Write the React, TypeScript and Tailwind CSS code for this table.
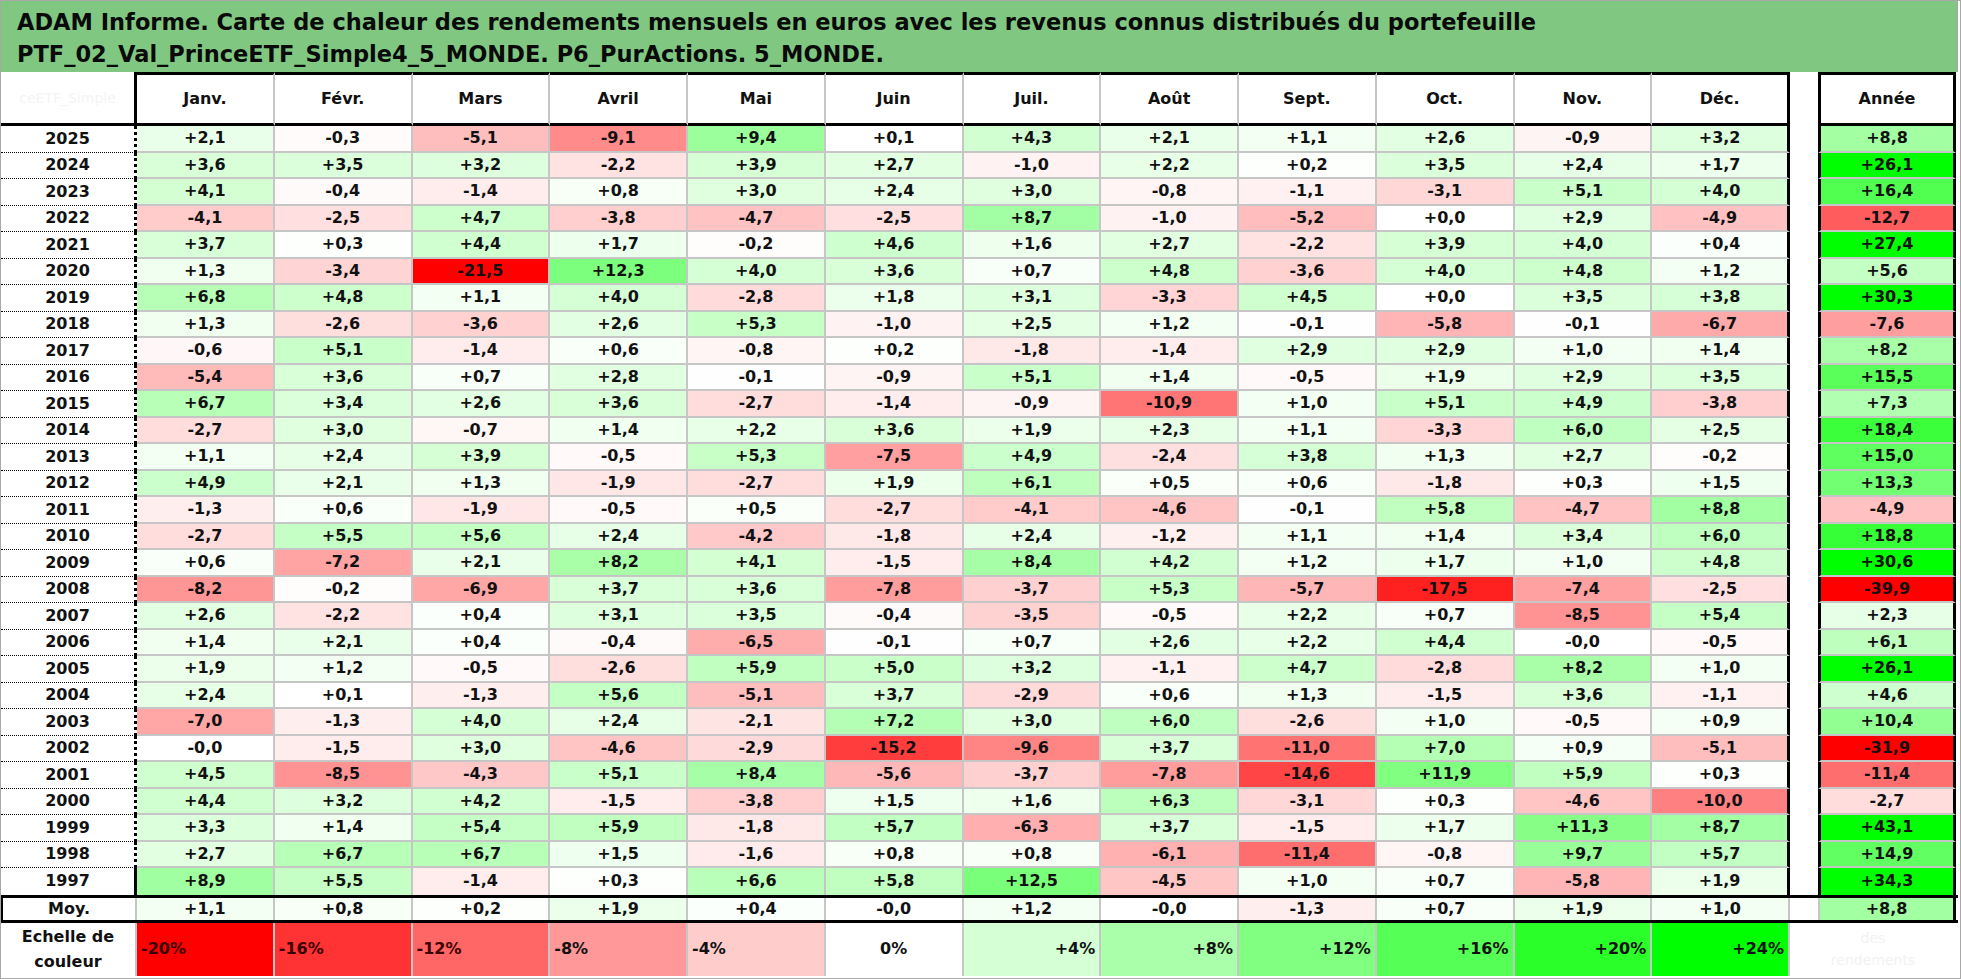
import React from "react";

const MONTHS = ["Janv.", "Févr.", "Mars", "Avril", "Mai", "Juin", "Juil.", "Août", "Sept.", "Oct.", "Nov.", "Déc."];

// year, 12 monthly returns, annual return
const DATA: [string, string, string][] = [
  ["2025", "+2,1 -0,3 -5,1 -9,1 +9,4 +0,1 +4,3 +2,1 +1,1 +2,6 -0,9 +3,2", "+8,8"],
  ["2024", "+3,6 +3,5 +3,2 -2,2 +3,9 +2,7 -1,0 +2,2 +0,2 +3,5 +2,4 +1,7", "+26,1"],
  ["2023", "+4,1 -0,4 -1,4 +0,8 +3,0 +2,4 +3,0 -0,8 -1,1 -3,1 +5,1 +4,0", "+16,4"],
  ["2022", "-4,1 -2,5 +4,7 -3,8 -4,7 -2,5 +8,7 -1,0 -5,2 +0,0 +2,9 -4,9", "-12,7"],
  ["2021", "+3,7 +0,3 +4,4 +1,7 -0,2 +4,6 +1,6 +2,7 -2,2 +3,9 +4,0 +0,4", "+27,4"],
  ["2020", "+1,3 -3,4 -21,5 +12,3 +4,0 +3,6 +0,7 +4,8 -3,6 +4,0 +4,8 +1,2", "+5,6"],
  ["2019", "+6,8 +4,8 +1,1 +4,0 -2,8 +1,8 +3,1 -3,3 +4,5 +0,0 +3,5 +3,8", "+30,3"],
  ["2018", "+1,3 -2,6 -3,6 +2,6 +5,3 -1,0 +2,5 +1,2 -0,1 -5,8 -0,1 -6,7", "-7,6"],
  ["2017", "-0,6 +5,1 -1,4 +0,6 -0,8 +0,2 -1,8 -1,4 +2,9 +2,9 +1,0 +1,4", "+8,2"],
  ["2016", "-5,4 +3,6 +0,7 +2,8 -0,1 -0,9 +5,1 +1,4 -0,5 +1,9 +2,9 +3,5", "+15,5"],
  ["2015", "+6,7 +3,4 +2,6 +3,6 -2,7 -1,4 -0,9 -10,9 +1,0 +5,1 +4,9 -3,8", "+7,3"],
  ["2014", "-2,7 +3,0 -0,7 +1,4 +2,2 +3,6 +1,9 +2,3 +1,1 -3,3 +6,0 +2,5", "+18,4"],
  ["2013", "+1,1 +2,4 +3,9 -0,5 +5,3 -7,5 +4,9 -2,4 +3,8 +1,3 +2,7 -0,2", "+15,0"],
  ["2012", "+4,9 +2,1 +1,3 -1,9 -2,7 +1,9 +6,1 +0,5 +0,6 -1,8 +0,3 +1,5", "+13,3"],
  ["2011", "-1,3 +0,6 -1,9 -0,5 +0,5 -2,7 -4,1 -4,6 -0,1 +5,8 -4,7 +8,8", "-4,9"],
  ["2010", "-2,7 +5,5 +5,6 +2,4 -4,2 -1,8 +2,4 -1,2 +1,1 +1,4 +3,4 +6,0", "+18,8"],
  ["2009", "+0,6 -7,2 +2,1 +8,2 +4,1 -1,5 +8,4 +4,2 +1,2 +1,7 +1,0 +4,8", "+30,6"],
  ["2008", "-8,2 -0,2 -6,9 +3,7 +3,6 -7,8 -3,7 +5,3 -5,7 -17,5 -7,4 -2,5", "-39,9"],
  ["2007", "+2,6 -2,2 +0,4 +3,1 +3,5 -0,4 -3,5 -0,5 +2,2 +0,7 -8,5 +5,4", "+2,3"],
  ["2006", "+1,4 +2,1 +0,4 -0,4 -6,5 -0,1 +0,7 +2,6 +2,2 +4,4 -0,0 -0,5", "+6,1"],
  ["2005", "+1,9 +1,2 -0,5 -2,6 +5,9 +5,0 +3,2 -1,1 +4,7 -2,8 +8,2 +1,0", "+26,1"],
  ["2004", "+2,4 +0,1 -1,3 +5,6 -5,1 +3,7 -2,9 +0,6 +1,3 -1,5 +3,6 -1,1", "+4,6"],
  ["2003", "-7,0 -1,3 +4,0 +2,4 -2,1 +7,2 +3,0 +6,0 -2,6 +1,0 -0,5 +0,9", "+10,4"],
  ["2002", "-0,0 -1,5 +3,0 -4,6 -2,9 -15,2 -9,6 +3,7 -11,0 +7,0 +0,9 -5,1", "-31,9"],
  ["2001", "+4,5 -8,5 -4,3 +5,1 +8,4 -5,6 -3,7 -7,8 -14,6 +11,9 +5,9 +0,3", "-11,4"],
  ["2000", "+4,4 +3,2 +4,2 -1,5 -3,8 +1,5 +1,6 +6,3 -3,1 +0,3 -4,6 -10,0", "-2,7"],
  ["1999", "+3,3 +1,4 +5,4 +5,9 -1,8 +5,7 -6,3 +3,7 -1,5 +1,7 +11,3 +8,7", "+43,1"],
  ["1998", "+2,7 +6,7 +6,7 +1,5 -1,6 +0,8 +0,8 -6,1 -11,4 -0,8 +9,7 +5,7", "+14,9"],
  ["1997", "+8,9 +5,5 -1,4 +0,3 +6,6 +5,8 +12,5 -4,5 +1,0 +0,7 -5,8 +1,9", "+34,3"],
];

const AVERAGE = "+1,1 +0,8 +0,2 +1,9 +0,4 -0,0 +1,2 -0,0 -1,3 +0,7 +1,9 +1,0".split(" ");
const AVERAGE_YEAR = "+8,8";

const SCALE = [-20, -16, -12, -8, -4, 0, 4, 8, 12, 16, 20, 24];

/* red down to -20 %, green up to +24 %, white at 0 */
function heat(v: number) {
  if (v < 0) {
    const c = Math.round(255 * (1 - Math.min(-v / 20, 1)));
    return `rgb(255,${c},${c})`;
  }
  const c = Math.round(255 * (1 - Math.min(v / 24, 1)));
  return `rgb(${c},255,${c})`;
}

const num = (s: string) => parseFloat(s.replace(",", "."));

function DataRow({ year, months, total, last }: { year: string; months: string[]; total: string; last: boolean }) {
  return (
    <div className="flex h-[26.5px]">
      <div
        className={`flex w-[136px] shrink-0 items-center justify-center border-r-[3px] border-r-black ${
          last ? "" : "border-b border-dotted border-b-black"
        }`}
      >
        {year}
      </div>
      {months.map((m, i) => (
        <div
          key={i}
          style={{ background: heat(num(m)) }}
          className={`flex w-[137.75px] shrink-0 items-center justify-center ${
            i < 11 ? "border-r-2 border-r-[#c6c6c6]" : "border-r-[3px] border-r-black"
          } ${last ? "" : "border-b-2 border-b-[#c6c6c6]"}`}
        >
          {m}
        </div>
      ))}
      <div className="w-[28px] shrink-0" />
      <div
        style={{ background: heat(num(total)) }}
        className={`flex w-[138px] shrink-0 items-center justify-center border-x-[3px] border-x-black ${
          last ? "" : "border-b-2 border-b-[#c6c6c6]"
        }`}
      >
        {total}
      </div>
    </div>
  );
}

export default function App() {
  return (
    <div className="h-[979px] w-[1961px] overflow-hidden border border-[#a8a8a8] bg-white font-['DejaVu_Sans',sans-serif] text-[16px] font-bold leading-none text-[#111]">
      {/* Title banner */}
      <div className="h-[71px] w-[1957px] border-r border-r-[#a8a8a8] bg-[#80c882] pl-[16px] pt-[5px] text-[22.5px] leading-[32px] text-[#0a0a0a]">
        <div>
          ADAM Informe. Carte de chaleur des rendements mensuels en euros avec les revenus connus distribués du portefeuille
        </div>
        <div>PTF_02_Val_PrinceETF_Simple4_5_MONDE. P6_PurActions. 5_MONDE.</div>
      </div>

      {/* Header */}
      <div className="flex h-[54px]">
        <div className="flex w-[136px] shrink-0 items-center justify-center border-b-[3px] border-r-[3px] border-black text-[14px] font-normal text-[#f4f4f4]">
          ceETF_Simple
        </div>
        {MONTHS.map((m, i) => (
          <div
            key={m}
            className={`flex w-[137.75px] shrink-0 items-center justify-center border-y-[3px] border-y-black ${
              i < 11 ? "border-r-2 border-r-[#c6c6c6]" : "border-r-[3px] border-r-black"
            }`}
          >
            {m}
          </div>
        ))}
        <div className="w-[28px] shrink-0" />
        <div className="flex w-[138px] shrink-0 items-center justify-center border-[3px] border-black">Année</div>
      </div>

      {/* Years */}
      {DATA.map(([year, months, total], i) => (
        <DataRow key={year} year={year} months={months.split(" ")} total={total} last={i === DATA.length - 1} />
      ))}

      {/* Average */}
      <div className="flex h-[28px] w-[1957px] border-y-[3px] border-black">
        <div className="flex w-[136px] shrink-0 items-center justify-center border-l-2 border-r-2 border-l-black border-r-[#c6c6c6]">
          Moy.
        </div>
        {AVERAGE.map((m, i) => (
          <div
            key={i}
            style={{ background: heat(num(m)) }}
            className="flex w-[137.75px] shrink-0 items-center justify-center border-r-2 border-r-[#c6c6c6]"
          >
            {m}
          </div>
        ))}
        <div className="w-[28px] shrink-0" />
        <div
          style={{ background: heat(num(AVERAGE_YEAR)) }}
          className="flex w-[138px] shrink-0 items-center justify-center border-l-2 border-r-[3px] border-l-[#c6c6c6] border-r-black"
        >
          {AVERAGE_YEAR}
        </div>
      </div>

      {/* Colour scale */}
      <div className="flex h-[53px]">
        <div className="flex w-[136px] shrink-0 flex-col items-center justify-center border-r-2 border-r-[#c6c6c6] leading-[25px]">
          <span>Echelle de</span>
          <span>couleur</span>
        </div>
        {SCALE.map((v, i) => (
          <div
            key={v}
            style={{ background: heat(v) }}
            className={`flex w-[137.75px] shrink-0 items-center border-r-2 border-r-[#c6c6c6] ${
              v < 0 ? "justify-start pl-[4px]" : v === 0 ? "justify-center" : "justify-end pr-[4px]"
            } ${i < 3 ? "text-[#3a0000]" : ""}`}
          >
            {v > 0 ? `+${v}%` : `${v}%`}
          </div>
        ))}
        <div className="flex w-[166px] shrink-0 flex-col items-center justify-center text-[14px] font-normal leading-[22px] text-[#f2f2f2]">
          <span>des</span>
          <span>rendements</span>
        </div>
      </div>
    </div>
  );
}
